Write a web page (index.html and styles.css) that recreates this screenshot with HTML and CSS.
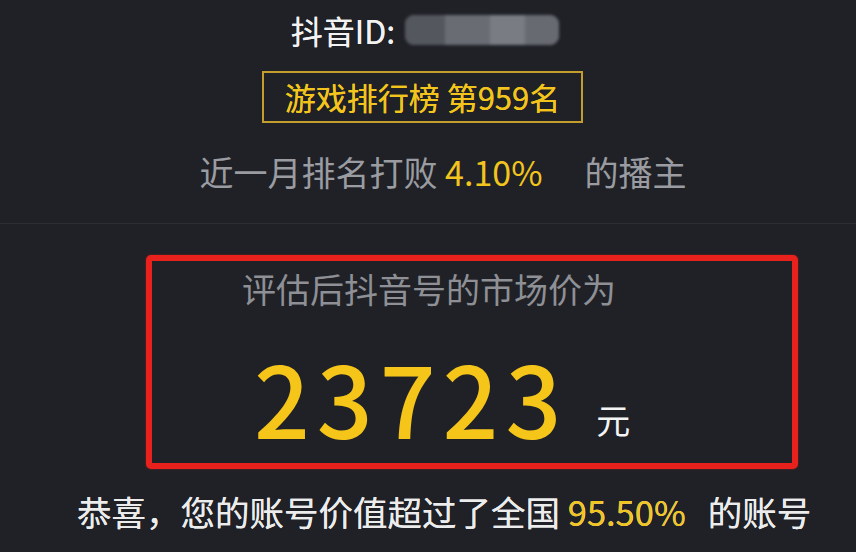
FILE: index.html
```html
<!DOCTYPE html>
<html lang="zh-CN">
<head>
<meta charset="utf-8">
<title>抖音号估值</title>
<link rel="stylesheet" href="styles.css">
</head>
<body>
<div class="page">
  <section class="top">
    <div class="id-row">
      <span class="id-label">抖音ID:</span>
      <span class="id-blur"><i class="b1"></i><i class="b2"></i><i class="b3"></i><i class="b4"></i></span>
    </div>
    <div class="badge">游戏排行榜 第959名</div>
    <div class="beat"><span>近一月排名打败 </span><span class="gold">4.10%</span><span class="beat-tail">的播主</span></div>
  </section>
  <div class="sep"></div>
  <section class="value-box">
    <div class="value-title">评估后抖音号的市场价为</div>
    <div class="value-row">
      <span class="value-num">23723</span>
      <span class="yuan">元</span>
    </div>
  </section>
  <div class="congrats"><span>恭喜，您的账号价值超过了全国 </span><span class="gold">95.50%</span><span class="tail">的账号</span></div>
</div>
</body>
</html>
```
FILE: styles.css
```css
html, body {
  margin: 0;
  padding: 0;
}
body {
  background: #1f2127;
  font-family: "Noto Sans CJK SC", "Noto Sans", sans-serif;
  width: 856px;
  height: 552px;
  overflow: hidden;
}
.page {
  display: flex;
  flex-direction: column;
  width: 856px;
  height: 552px;
}
.top {
  display: flex;
  flex-direction: column;
  align-items: center;
}
.id-row {
  display: flex;
  align-items: center;
  height: 40px;
  margin-top: 10px;
  margin-left: -6px;
}
.id-label {
  font-size: 32px;
  line-height: 40px;
  color: #f2f2f2;
  text-shadow: 0 0 0.6px #f2f2f2;
}
.id-blur {
  display: flex;
  width: 154px;
  height: 30px;
  margin-left: 10px;
  border-radius: 9px;
  overflow: hidden;
  filter: blur(1.5px);
  background: #5e6068;
}
.id-blur i {
  display: block;
  height: 100%;
}
.b1 { width: 40px; background: #55575f; }
.b2 { width: 45px; background: #6a6c74; }
.b3 { width: 35px; background: #7a7c84; }
.b4 { width: 34px; background: #686a72; }
.badge {
  margin-top: 21px;
  margin-left: -11px;
  border: 2px solid #c49e2c;
  height: 48px;
  line-height: 48px;
  padding: 0 21px;
  font-size: 31px;
  color: #f3c51c;
  text-shadow: 0 0 0.6px #f3c51c;
}
.beat {
  display: flex;
  margin-top: 27px;
  margin-left: 30px;
  font-size: 34px;
  line-height: 44px;
  color: #9a9ca1;
  white-space: pre;
}
.gold {
  color: #f2c41e;
}
.beat-tail {
  margin-left: 42px;
}
.sep {
  margin-top: 29px;
  height: 1px;
  background: #2b2e34;
}
.value-box {
  box-sizing: border-box;
  margin-top: 31px;
  margin-left: 146px;
  width: 652px;
  height: 214px;
  border: 6px solid #e8211c;
  border-radius: 5px;
  box-shadow: 0 0 2px rgba(232, 33, 28, 0.6);
}
.value-title {
  margin-top: 6px;
  padding-left: 90px;
  font-size: 34px;
  line-height: 44px;
  color: #8e9095;
}
.value-row {
  display: flex;
  align-items: baseline;
  margin-top: 35px;
  padding-left: 102px;
}
.value-num {
  font-size: 98px;
  line-height: 100px;
  letter-spacing: 7px;
  font-weight: 500;
  color: #f5c51a;
}
.yuan {
  margin-left: 28px;
  font-size: 34px;
  line-height: 40px;
  color: #f4f4f4;
  position: relative;
  top: -5px;
}
.congrats {
  display: flex;
  margin-top: 20px;
  padding-left: 77px;
  font-size: 34.5px;
  line-height: 44px;
  color: #ececec;
  text-shadow: 0 0 0.6px #ececec;
  white-space: pre;
}
.tail {
  margin-left: 22px;
}
```
